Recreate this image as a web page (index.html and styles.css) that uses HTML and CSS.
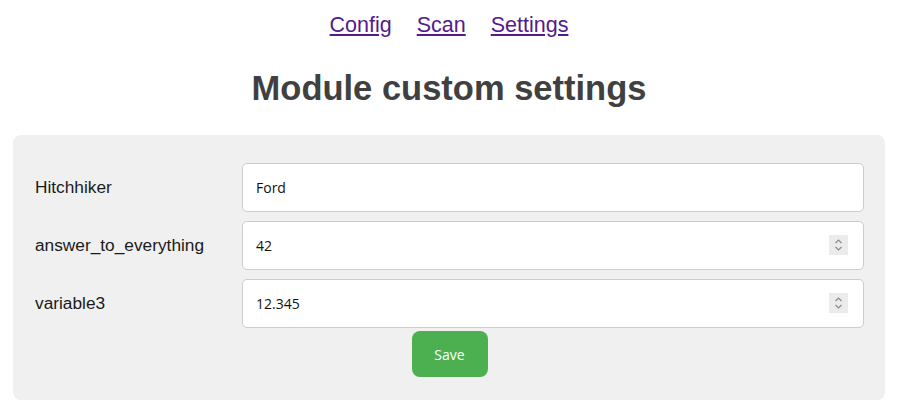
FILE: index.html
```html
<!DOCTYPE html>
<html lang="en">
<head>
  <meta charset="UTF-8">
  <meta name="viewport" content="width=device-width, initial-scale=1.0">
  <title>Module custom settings</title>
  <link rel="stylesheet" href="styles.css">
</head>
<body>
  <nav class="nav">
    <a href="#config">Config</a>
    <a href="#scan">Scan</a>
    <a href="#settings">Settings</a>
  </nav>

  <h1 class="title">Module custom settings</h1>

  <form class="panel" id="settings">
    <div class="row">
      <label for="hitchhiker">Hitchhiker</label>
      <div class="field">
        <input type="text" id="hitchhiker" value="Ford">
      </div>
    </div>
    <div class="row">
      <label for="answer">answer_to_everything</label>
      <div class="field">
        <input type="number" id="answer" value="42">
        <span class="spin">
          <svg width="19" height="20" viewBox="0 0 19 20"><rect width="19" height="20" fill="#ebebeb"/><polyline points="6.5,8 9.5,5 12.5,8" fill="none" stroke="#8a8a8a" stroke-width="1.2"/><polyline points="6.5,12 9.5,15 12.5,12" fill="none" stroke="#8a8a8a" stroke-width="1.2"/></svg>
        </span>
      </div>
    </div>
    <div class="row">
      <label for="variable3">variable3</label>
      <div class="field">
        <input type="number" id="variable3" value="12.345" step="0.001">
        <span class="spin">
          <svg width="19" height="20" viewBox="0 0 19 20"><rect width="19" height="20" fill="#ebebeb"/><polyline points="6.5,8 9.5,5 12.5,8" fill="none" stroke="#8a8a8a" stroke-width="1.2"/><polyline points="6.5,12 9.5,15 12.5,12" fill="none" stroke="#8a8a8a" stroke-width="1.2"/></svg>
        </span>
      </div>
    </div>
    <div class="actions">
      <button type="submit">Save</button>
    </div>
  </form>
</body>
</html>
```

FILE: styles.css
```css
body { margin: 0; padding: 0 13px; font-family: "Liberation Sans", Arial, sans-serif; background: #fff; }
.nav { display: flex; justify-content: center; gap: 25px; padding-top: 13px; font-size: 21.5px; }
.nav a, .nav a:visited { color: #551a8b; }
.title { margin: 30px 0 0; text-align: center; font-size: 34.5px; color: #404040; line-height: 40px; }
.panel { margin-top: 27px; padding: 28px 21px 23px 22px; background: #f0f0f0; border-radius: 8px; }
.row { display: flex; align-items: center; margin-bottom: 9px; }
.row label { width: 207px; flex-shrink: 0; font-size: 17.3px; color: #1a1a1a; }
.field { flex: 1; position: relative; display: flex; }
.field input { flex: 1; height: 49px; box-sizing: border-box; padding: 0 13px; border: 1px solid #ccc; border-radius: 5px; background: #fff; font-family: "Open Sans", sans-serif; font-size: 14px; color: #111; -moz-appearance: textfield; }
.field input::-webkit-inner-spin-button { -webkit-appearance: none; margin: 0; }
.spin { position: absolute; right: 16px; top: 14px; display: block; width: 19px; height: 20px; line-height: 0; }
.actions { display: flex; justify-content: center; margin-top: -6px; }
.actions button { width: 76px; height: 46px; border: none; border-radius: 8px; background: #4caf50; color: #fff; font-family: "Open Sans", sans-serif; font-size: 14px; }
```
